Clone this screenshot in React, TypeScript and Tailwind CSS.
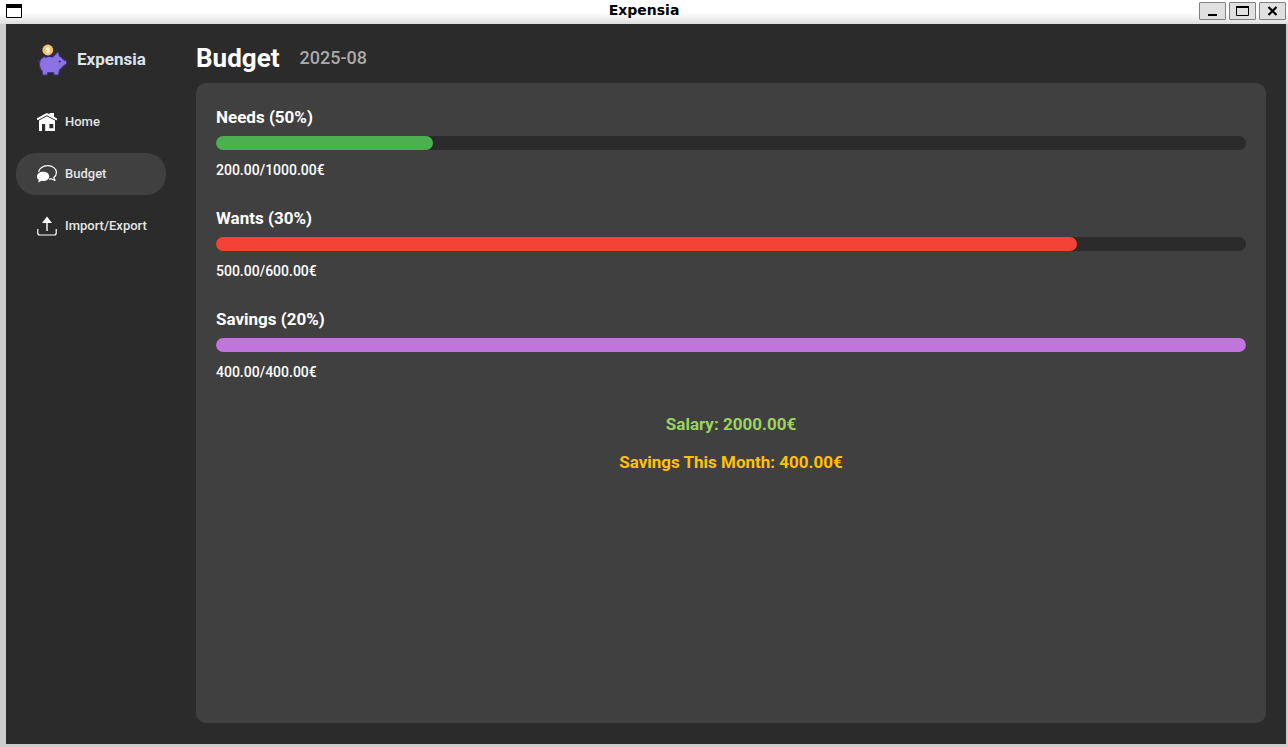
import type { ReactNode } from "react";

type BudgetGroup = {
  id: string;
  label: string;
  spent: number;
  limit: number;
  color: string;
};

const groups: BudgetGroup[] = [
  { id: "needs", label: "Needs (50%)", spent: 200, limit: 1000, color: "bg-[#4caf50]" },
  { id: "wants", label: "Wants (30%)", spent: 500, limit: 600, color: "bg-[#f44336]" },
  { id: "savings", label: "Savings (20%)", spent: 400, limit: 400, color: "bg-[#c074dc]" },
];

function PiggyLogo() {
  return (
    <svg className="h-8 w-8 shrink-0" viewBox="1.5 0.5 32 32" aria-hidden="true">
      <g stroke="#40348c" strokeWidth="1" strokeLinejoin="round" strokeLinecap="round">
        <path d="M4.5 18.5C2.6 19.5 1.8 17.5 2.8 16.2" fill="none" />
        <path
          d="M4 20.5C4 15 8.5 12.5 13 12.5H18.5L22.5 8.2L24 12.8C26 13.7 27 15 27.8 16.3L31 17.4V20.6L28 22.2C27 24 25.5 25.3 24 26.2L23 31.5H18.7L18.2 29H12.2L11.6 31.5H7.2L6.6 27.3C4.8 25.8 4 23.4 4 20.5Z"
          fill="#8d72e3"
        />
      </g>
      <path d="M9.5 13.8C12 12.6 15 12.6 18 13.2" fill="none" stroke="#2d246b" strokeWidth="1.4" />
      <circle cx="24.2" cy="18.1" r="1" fill="#2d246b" />
      <circle cx="12.3" cy="6.5" r="5.4" fill="#f9c172" />
      <path
        d="M14.1 4.8C13.5 4 10.8 3.9 10.8 5.3C10.8 6.8 14 6.1 14 7.7C14 9.1 11.2 9 10.6 8M12.4 3.2V9.9"
        fill="none"
        stroke="#fff3d8"
        strokeWidth="1.2"
      />
    </svg>
  );
}

function HomeIcon() {
  return (
    <svg className="h-5 w-5 shrink-0" viewBox="0 0 20 20" fill="#fff" aria-hidden="true">
      <path d="M9.8 1L12.5 2.3V1H17V4.7L20 6.4V8.2L18.8 8L9.8 3.3L1.2 8L0 7.8V6.2Z" />
      <path
        fillRule="evenodd"
        d="M9.8 4.3L18 8.6V19H8.2V12H5V19H2V8.6ZM12.4 12V16.2H16.3V12Z"
      />
    </svg>
  );
}

function ChatIcon() {
  return (
    <svg className="h-5 w-5 shrink-0" viewBox="0 0 20 20" aria-hidden="true">
      <path
        d="M1.6 7.8C2.2 4.2 6 1.7 10.6 1.7C15.6 1.7 19.4 4.6 19.4 8.4C19.4 10.5 18.4 12.3 16.8 13.5L18 16.4L14.2 14.8L12 15.2"
        fill="none"
        stroke="#fff"
        strokeWidth="1.2"
        strokeLinejoin="round"
      />
      <path
        d="M6.2 7.8C9.7 7.8 12.2 9.8 12.2 12.4C12.2 15 9.7 17 6.2 17L4.6 16.8L1.2 18.4L1.8 15.8C.6 15 0 13.8 0 12.4C0 9.8 2.7 7.8 6.2 7.8Z"
        fill="#fff"
      />
    </svg>
  );
}

function UploadIcon() {
  return (
    <svg className="h-5 w-5 shrink-0" viewBox="0 0 20 20" aria-hidden="true">
      <path d="M10 .5L15 7H5Z" fill="#fff" />
      <path d="M10 6V15" stroke="#fff" strokeWidth="1.4" />
      <path
        d="M.8 13V17Q.8 19 2.8 19H17.2Q19.2 19 19.2 17V13"
        fill="none"
        stroke="#fff"
        strokeWidth="1.2"
      />
    </svg>
  );
}

function WindowButton({ label, children }: { label: string; children: ReactNode }) {
  return (
    <button
      type="button"
      aria-label={label}
      className="flex h-[18px] w-[27px] items-center justify-center rounded-[1px] border border-[#808080] bg-[#e0e0e0]"
    >
      <svg width="13" height="10" viewBox="0 0 13 10" fill="none" stroke="#000" aria-hidden="true">
        {children}
      </svg>
    </button>
  );
}

function TitleBar() {
  return (
    <header className="grid h-6 shrink-0 grid-cols-[1fr_auto_1fr] items-start bg-linear-to-b from-white from-55% to-[#dedede]">
      <svg className="mt-1 ml-1.5 h-3.5 w-4" viewBox="0 0 16 14" aria-hidden="true">
        <path d="M.5 .5H15.5V13.5H.5Z" fill="#fff" stroke="#000" />
        <path d="M0 0H16V4H0Z" />
      </svg>
      <span className="font-['DejaVu_Sans',sans-serif] text-[14px] leading-5 font-bold text-black">
        Expensia
      </span>
      <div className="mt-0.5 mr-0.5 flex justify-end gap-[3px]">
        <WindowButton label="Minimize">
          <path d="M2 9H11" strokeWidth="2" />
        </WindowButton>
        <WindowButton label="Maximize">
          <path d="M.5 1V9.5H12.5V1" />
          <path d="M0 1H13" strokeWidth="2" />
        </WindowButton>
        <WindowButton label="Close">
          <path d="M2.5 1L10.5 9M10.5 1L2.5 9" strokeWidth="2.2" />
        </WindowButton>
      </div>
    </header>
  );
}

function NavItem({ icon, label, active }: { icon: ReactNode; label: string; active?: boolean }) {
  return (
    <button
      type="button"
      aria-current={active ? "page" : undefined}
      className={`flex h-[42px] w-full items-center gap-2 rounded-[20px] pl-[21px] text-[13px] font-medium text-[#e4e4e4] ${
        active ? "bg-[#404040]" : ""
      }`}
    >
      {icon}
      {label}
    </button>
  );
}

function Progress({ group }: { group: BudgetGroup }) {
  const ratio = group.spent / group.limit;
  return (
    <section>
      <h2 id={group.id} className="text-[17px] leading-[26px] font-bold">
        {group.label}
      </h2>
      <div
        role="progressbar"
        aria-labelledby={group.id}
        aria-valuemin={0}
        aria-valuemax={group.limit}
        aria-valuenow={group.spent}
        className="mt-1.5 mb-2 h-3.5 rounded-full bg-[#2b2b2b]"
      >
        <div
          className={`h-full rounded-full ${group.color}`}
          style={{ width: `calc(14px + (100% - 14px) * ${ratio})` }}
        />
      </div>
      <p className="text-sm leading-6 font-medium">
        {group.spent.toFixed(2)}/{group.limit.toFixed(2)}€
      </p>
    </section>
  );
}

export default function App() {
  return (
    <div className="flex min-h-screen flex-col bg-[#cccccc] font-[Roboto,sans-serif]">
      <TitleBar />
      <div className="mr-0.5 mb-[3px] ml-1.5 flex grow bg-[#2b2b2b] text-white">
        <aside className="w-[170px] shrink-0 px-2.5 pt-5">
          <div className="flex h-8 items-center gap-2 pl-[21px]">
            <PiggyLogo />
            <span className="text-[17px] font-bold text-[#dce4ee]">Expensia</span>
          </div>
          <nav className="mt-[25px] flex flex-col gap-2.5">
            <NavItem icon={<HomeIcon />} label="Home" />
            <NavItem icon={<ChatIcon />} label="Budget" active />
            <NavItem icon={<UploadIcon />} label="Import/Export" />
          </nav>
        </aside>
        <main className="flex grow flex-col px-5 pt-[19px] pb-[21px]">
          <div className="flex h-[30px] items-center gap-5">
            <h1 className="text-[26px] leading-8 font-bold">Budget</h1>
            <span className="text-lg leading-[30px] font-medium text-[#aaaaaa]">2025-08</span>
          </div>
          <div className="mt-2.5 flex grow flex-col gap-[23px] rounded-[10px] bg-[#404040] px-5 pt-[21px] pb-5">
            {groups.map((group) => (
              <Progress key={group.id} group={group} />
            ))}
            <div className="mt-1 flex flex-col items-center gap-3 text-[17px] leading-[26px] font-bold">
              <p className="text-[#98d45f]">Salary: 2000.00€</p>
              <p className="text-[#ffc107]">Savings This Month: 400.00€</p>
            </div>
          </div>
        </main>
      </div>
    </div>
  );
}
